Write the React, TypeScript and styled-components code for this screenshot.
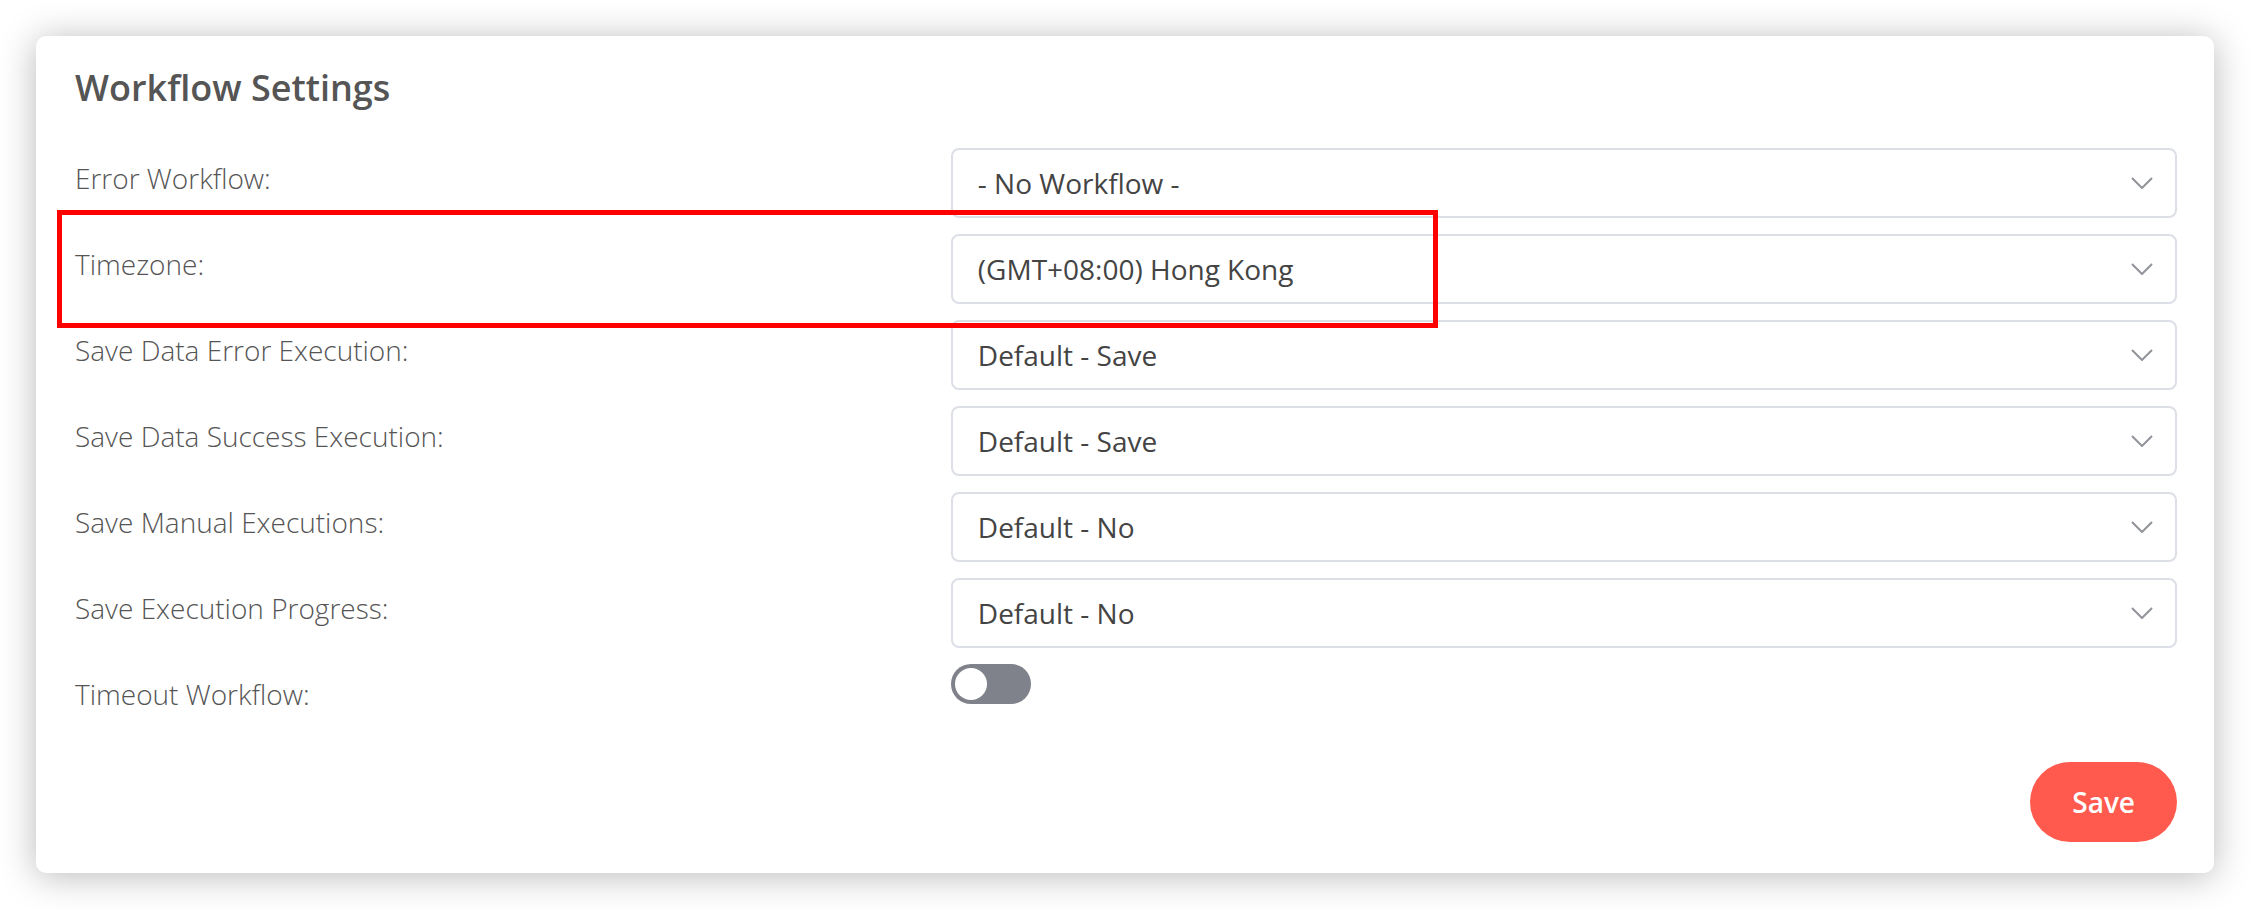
import styled, { createGlobalStyle } from "styled-components";
import { useState } from "react";

const GlobalStyle = createGlobalStyle`
  html, body {
    margin: 0;
    padding: 0;
    background: #ffffff;
    font-family: "Open Sans", "Noto Sans", sans-serif;
  }
`;

const Page = styled.div`
  position: relative;
  width: 2250px;
  height: 910px;
  padding: 36px 36px 0 36px;
  box-sizing: border-box;
`;

const Card = styled.div`
  width: 2178px;
  box-sizing: border-box;
  background: #fff;
  border-radius: 10px;
  box-shadow: 0 3px 36px rgba(0, 0, 0, 0.28);
  padding: 27px 37px 31px 39px;
  display: flex;
  flex-direction: column;
`;

const Title = styled.h2`
  margin: 0 0 36px 0;
  font-size: 36px;
  font-weight: 600;
  line-height: 49px;
  color: #555;
`;

const Rows = styled.div`
  display: flex;
  flex-direction: column;
  gap: 16px;
`;

const Row = styled.div`
  display: grid;
  grid-template-columns: 10fr 14fr;
  align-items: start;
`;

const Label = styled.div`
  padding-top: 11px;
  font-size: 28px;
  font-weight: 300;
  line-height: 38px;
  color: #555;
`;

const SelectBox = styled.div`
  height: 70px;
  box-sizing: border-box;
  border: 2px solid #dcdfe6;
  border-radius: 8px;
  display: flex;
  align-items: center;
  justify-content: space-between;
  padding: 0 22px 0 25px;
  font-size: 28px;
  color: #444;
  cursor: pointer;
`;

const Chevron = styled.svg`
  width: 22px;
  height: 12px;
  flex-shrink: 0;
`;

const Toggle = styled.button<{ $on: boolean }>`
  width: 80px;
  height: 40px;
  border: none;
  border-radius: 20px;
  padding: 0 4px;
  background: ${(p) => (p.$on ? "#ff5a4d" : "#7f828a")};
  display: flex;
  align-items: center;
  justify-content: ${(p) => (p.$on ? "flex-end" : "flex-start")};
  cursor: pointer;

  span {
    display: block;
    width: 32px;
    height: 32px;
    border-radius: 50%;
    background: #fff;
  }
`;

const Footer = styled.div`
  display: flex;
  justify-content: flex-end;
  margin-top: 49px;
`;

const SaveButton = styled.button`
  height: 80px;
  padding: 0 42px;
  border: none;
  border-radius: 40px;
  background: #ff5a4d;
  color: #fff;
  font-family: "Open Sans", "Noto Sans", sans-serif;
  font-size: 28px;
  font-weight: 600;
  cursor: pointer;
`;

const Highlight = styled.div`
  position: absolute;
  left: 57px;
  top: 210px;
  width: 1381px;
  height: 118px;
  box-sizing: border-box;
  border: 5px solid #ff0000;
  pointer-events: none;
`;

const settings = [
  { label: "Error Workflow:", value: "- No Workflow -" },
  { label: "Timezone:", value: "(GMT+08:00) Hong Kong" },
  { label: "Save Data Error Execution:", value: "Default - Save" },
  { label: "Save Data Success Execution:", value: "Default - Save" },
  { label: "Save Manual Executions:", value: "Default - No" },
  { label: "Save Execution Progress:", value: "Default - No" },
];

export default function App() {
  const [timeout, setTimeoutOn] = useState(false);

  return (
    <Page>
      <GlobalStyle />
      <Card>
        <Title>Workflow Settings</Title>
        <Rows>
          {settings.map((s) => (
            <Row key={s.label}>
              <Label>{s.label}</Label>
              <SelectBox>
                <span>{s.value}</span>
                <Chevron viewBox="0 0 22 12">
                  <polyline points="1,1 11,11 21,1" fill="none" stroke="#909399" strokeWidth="2" />
                </Chevron>
              </SelectBox>
            </Row>
          ))}
          <Row>
            <Label>Timeout Workflow:</Label>
            <div>
              <Toggle $on={timeout} onClick={() => setTimeoutOn((v) => !v)}>
                <span />
              </Toggle>
            </div>
          </Row>
        </Rows>
        <Footer>
          <SaveButton>Save</SaveButton>
        </Footer>
      </Card>
      <Highlight />
    </Page>
  );
}
